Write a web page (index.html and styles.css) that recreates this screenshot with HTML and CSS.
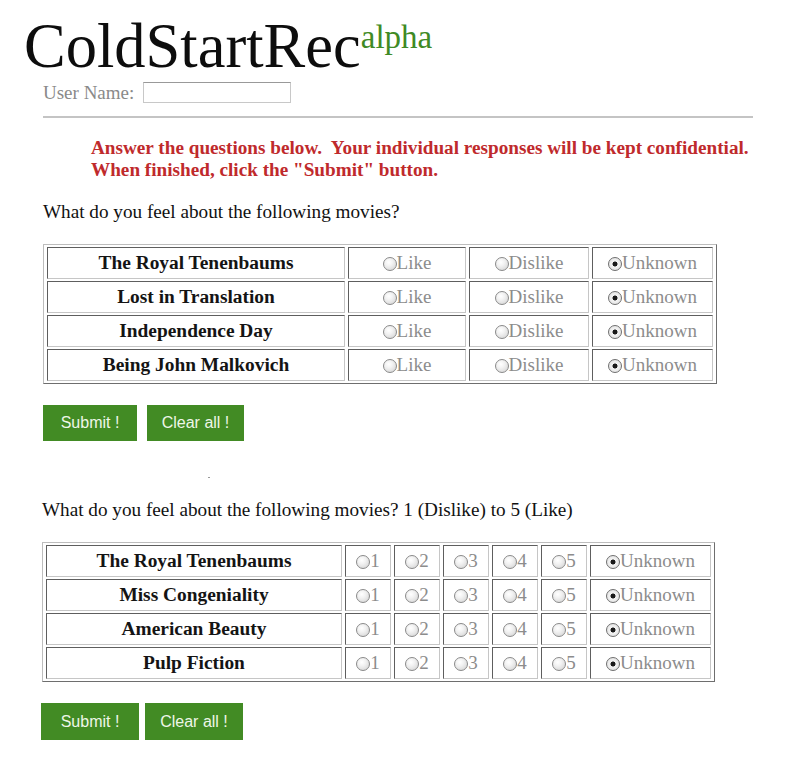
FILE: index.html
```html
<!DOCTYPE html>
<html>
<head>
<meta charset="utf-8">
<title>ColdStartRec</title>
<link rel="stylesheet" href="styles.css">
</head>
<body>
<div class="page">
  <h1 class="title">ColdStartRec<sup class="alpha">alpha</sup></h1>
  <div class="user-row">
    <label class="user-label" for="uname">User Name:</label>
    <input id="uname" class="user-input" type="text">
  </div>
  <hr class="rule">
  <p class="notice">Answer the questions below.&nbsp; Your individual responses will be kept confidential.<br>When finished, click the "Submit" button.</p>

  <p class="question">What do you feel about the following movies?</p>
  <table class="grid grid-a">
    <tr><td class="movie">The Royal Tenenbaums</td><td class="opt c-like"><input class="rb" type="radio" name="a1">Like</td><td class="opt c-dis"><input class="rb" type="radio" name="a1">Dislike</td><td class="opt c-unk"><input class="rb" type="radio" name="a1" checked>Unknown</td></tr>
    <tr><td class="movie">Lost in Translation</td><td class="opt"><input class="rb" type="radio" name="a2">Like</td><td class="opt"><input class="rb" type="radio" name="a2">Dislike</td><td class="opt"><input class="rb" type="radio" name="a2" checked>Unknown</td></tr>
    <tr><td class="movie">Independence Day</td><td class="opt"><input class="rb" type="radio" name="a3">Like</td><td class="opt"><input class="rb" type="radio" name="a3">Dislike</td><td class="opt"><input class="rb" type="radio" name="a3" checked>Unknown</td></tr>
    <tr><td class="movie">Being John Malkovich</td><td class="opt"><input class="rb" type="radio" name="a4">Like</td><td class="opt"><input class="rb" type="radio" name="a4">Dislike</td><td class="opt"><input class="rb" type="radio" name="a4" checked>Unknown</td></tr>
  </table>
  <div class="buttons">
    <button class="btn btn-submit" type="button">Submit !</button>
    <button class="btn btn-clear" type="button">Clear all !</button>
  </div>
  <div class="spacer"><span class="speck"></span></div>

  <p class="question q2">What do you feel about the following movies? 1 (Dislike) to 5 (Like)</p>
  <table class="grid grid-b">
    <tr><td class="movie m2">The Royal Tenenbaums</td><td class="opt num"><input class="rb" type="radio" name="b1">1</td><td class="opt num"><input class="rb" type="radio" name="b1">2</td><td class="opt num"><input class="rb" type="radio" name="b1">3</td><td class="opt num"><input class="rb" type="radio" name="b1">4</td><td class="opt num"><input class="rb" type="radio" name="b1">5</td><td class="opt unk2"><input class="rb" type="radio" name="b1" checked>Unknown</td></tr>
    <tr><td class="movie m2">Miss Congeniality</td><td class="opt num"><input class="rb" type="radio" name="b2">1</td><td class="opt num"><input class="rb" type="radio" name="b2">2</td><td class="opt num"><input class="rb" type="radio" name="b2">3</td><td class="opt num"><input class="rb" type="radio" name="b2">4</td><td class="opt num"><input class="rb" type="radio" name="b2">5</td><td class="opt unk2"><input class="rb" type="radio" name="b2" checked>Unknown</td></tr>
    <tr><td class="movie m2">American Beauty</td><td class="opt num"><input class="rb" type="radio" name="b3">1</td><td class="opt num"><input class="rb" type="radio" name="b3">2</td><td class="opt num"><input class="rb" type="radio" name="b3">3</td><td class="opt num"><input class="rb" type="radio" name="b3">4</td><td class="opt num"><input class="rb" type="radio" name="b3">5</td><td class="opt unk2"><input class="rb" type="radio" name="b3" checked>Unknown</td></tr>
    <tr><td class="movie m2">Pulp Fiction</td><td class="opt num"><input class="rb" type="radio" name="b4">1</td><td class="opt num"><input class="rb" type="radio" name="b4">2</td><td class="opt num"><input class="rb" type="radio" name="b4">3</td><td class="opt num"><input class="rb" type="radio" name="b4">4</td><td class="opt num"><input class="rb" type="radio" name="b4">5</td><td class="opt unk2"><input class="rb" type="radio" name="b4" checked>Unknown</td></tr>
  </table>
  <div class="buttons buttons-b">
    <button class="btn btn-submit2" type="button">Submit !</button>
    <button class="btn btn-clear2" type="button">Clear all !</button>
  </div>
</div>
</body>
</html>
```

FILE: styles.css
```css
html, body {
  margin: 0;
  padding: 0;
  background: #fff;
}
body {
  font-family: "Liberation Serif", "Times New Roman", serif;
  color: #111;
}
.page {
  padding-left: 43px;
}
.title {
  margin: 15px 0 0 -19px;
  font-family: "Liberation Serif", serif;
  font-weight: normal;
  font-size: 62.5px;
  line-height: 62px;
  height: 62px;
  color: #0d0d0d;
  white-space: nowrap;
}
.alpha {
  font-size: 33px;
  color: #3f8a25;
  vertical-align: 19px;
  line-height: 0;
  margin-left: 0;
}
.user-row {
  display: flex;
  align-items: center;
  height: 23px;
  margin-top: 4px;
}
.user-label {
  font-size: 19px;
  color: #8a8a8a;
  margin-right: 9px;
}
.user-input {
  width: 148px;
  height: 21px;
  box-sizing: border-box;
  border: 1px solid #c8c8c8;
  border-top-color: #999;
  margin: 0;
  padding: 0;
  background: #fff;
}
.rule {
  width: 710px;
  margin: 12px 0 0 0;
  border: 0;
  height: 2px;
  background: #c4c4c4;
}
.notice {
  margin: 19px 0 0 48px;
  font-size: 19.2px;
  line-height: 22px;
  font-weight: bold;
  color: #bf2a2c;
  white-space: nowrap;
}
.question {
  margin: 20px 0 0 0;
  font-size: 19.2px;
  line-height: 22px;
  color: #111;
}
.q2 {
  margin-top: 0;
  margin-left: -1px;
}
.grid {
  border-collapse: separate;
  border-spacing: 3px 2px;
  border: 1px solid;
  border-color: #bdbdbd #6e6e6e #6e6e6e #bdbdbd;
  margin-top: 21px;
}
.grid-b {
  margin-left: -1px;
  margin-top: 21px;
}
.grid td {
  border: 1px solid;
  border-color: #5e5e5e #c6c6c6 #c6c6c6 #5e5e5e;
  padding: 0;
  text-align: center;
  vertical-align: middle;
  font-size: 19px;
  line-height: 22px;
  box-sizing: border-box;
  height: 32px;
}
.grid td.movie {
  width: 298px;
  font-weight: bold;
  font-size: 19.4px;
  color: #141414;
}
.grid td.m2 {
  width: 296px;
}
.opt {
  color: #8c8c8c;
  white-space: nowrap;
}
.c-like { width: 118px; }
.c-dis { width: 120px; }
.c-unk { width: 121px; }
.num { width: 46px; }
.unk2 { width: 121px; }
.rb {
  -webkit-appearance: none;
  appearance: none;
  width: 14px;
  height: 14px;
  margin: 0;
  border: 1px solid #8a8a8a;
  border-radius: 50%;
  background: radial-gradient(circle at 40% 35%, #ffffff 0, #f2f2f2 35%, #cfcfcf 100%);
  vertical-align: -2px;
  box-sizing: border-box;
}
.rb:checked {
  border-color: #6f6f6f;
  background: radial-gradient(circle, #1a1a1a 0, #1a1a1a 2.2px, #f4f4f4 2.8px, #dcdcdc 100%);
}
.buttons {
  display: flex;
  gap: 10px;
  margin-top: 21px;
}
.buttons-b {
  gap: 6px;
  margin-top: 21px;
  margin-left: -2px;
}
.btn {
  height: 36px;
  border: 0;
  padding: 0;
  background: #428b24;
  color: #eef6e8;
  font-family: "Liberation Sans", Arial, sans-serif;
  font-size: 16px;
  text-align: center;
}
.btn-submit { width: 94px; }
.btn-clear { width: 97px; }
.btn-submit2 { width: 98px; height: 37px; }
.btn-clear2 { width: 98px; height: 37px; }
.spacer {
  height: 58px;
  position: relative;
}
.speck {
  position: absolute;
  left: 165px;
  top: 36px;
  width: 2px;
  height: 1px;
  background: #999;
}
```
